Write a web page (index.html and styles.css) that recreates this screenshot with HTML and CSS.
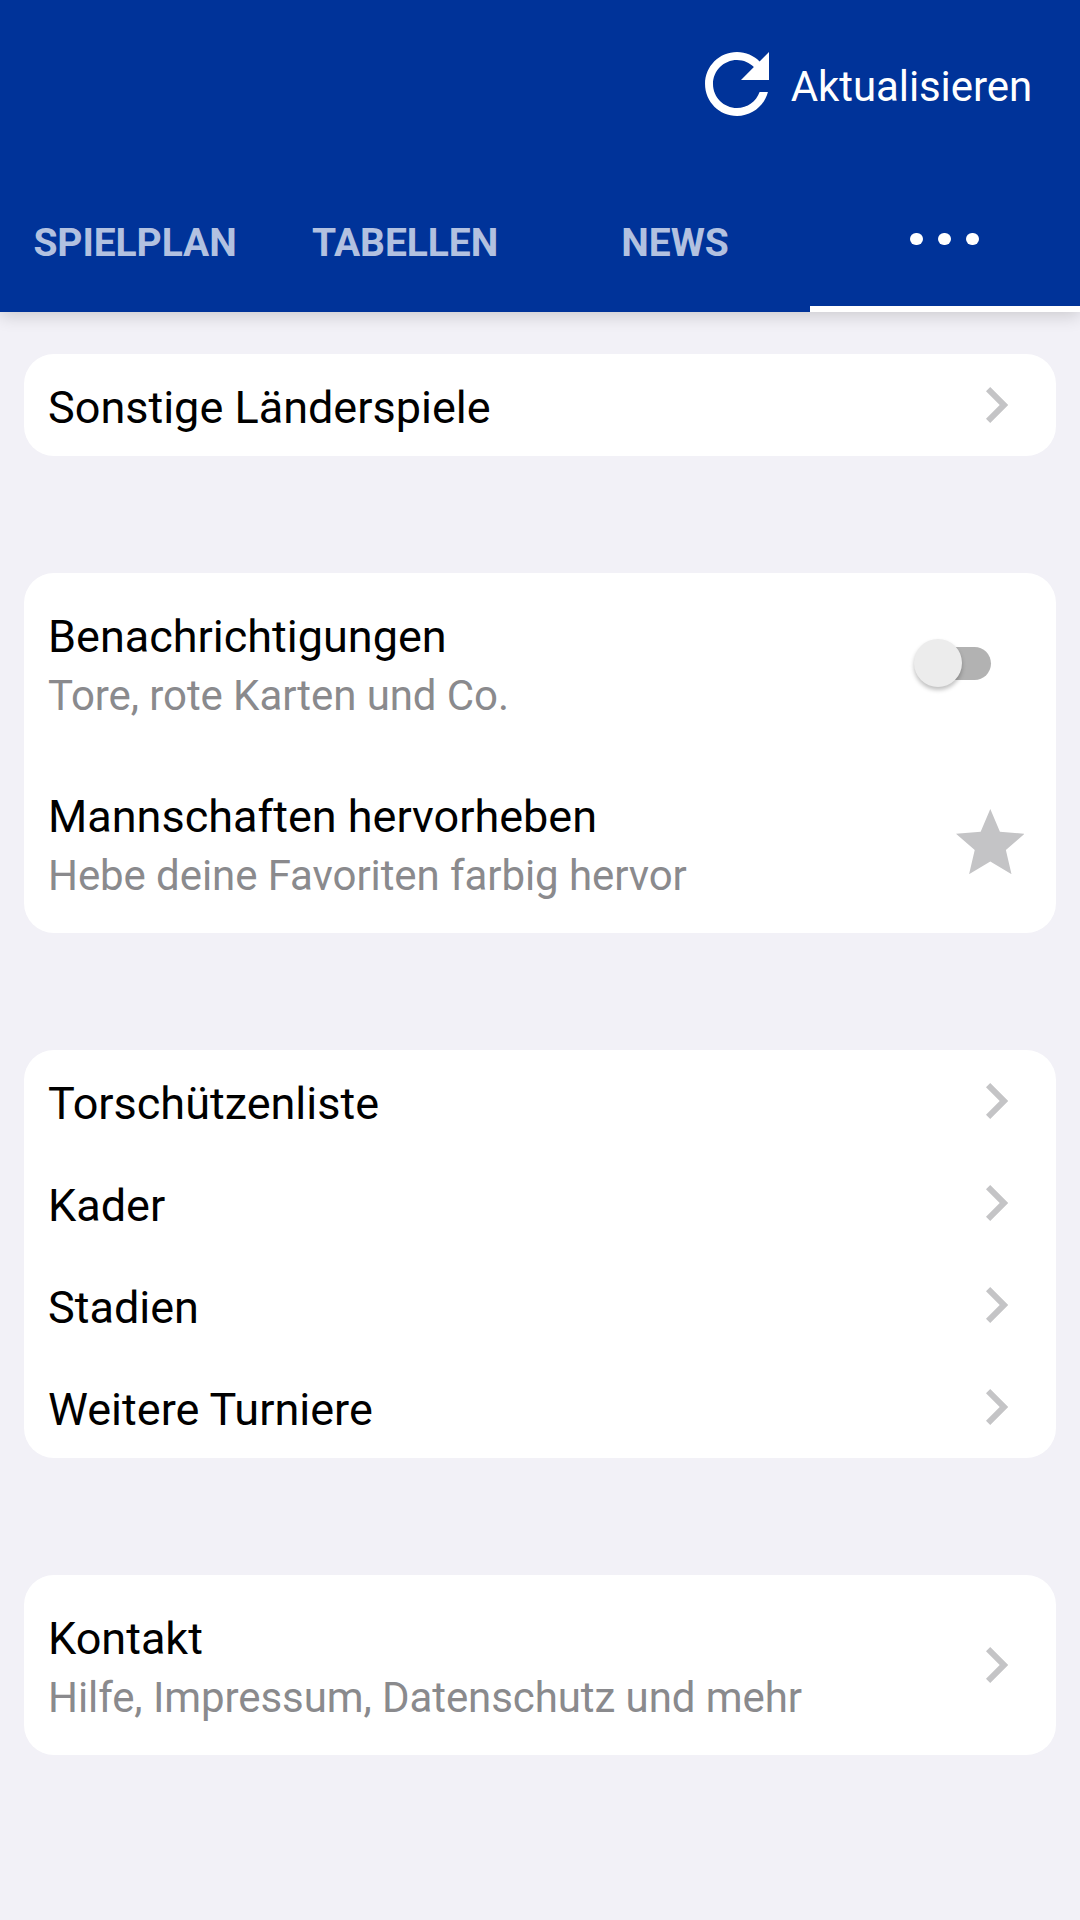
FILE: index.html
```html
<!DOCTYPE html>
<html lang="de">
<head>
<meta charset="utf-8">
<title>Mehr</title>
<link rel="stylesheet" href="styles.css">
</head>
<body>
<svg class="defs" width="0" height="0"><symbol id="chevron" viewBox="8.59 6 7.41 12"><path d="M10 6 8.59 7.41 13.17 12l-4.58 4.59L10 18l6-6z" fill="#c4c4c6"/></symbol></svg>
<header class="header">
  <div class="toolbar">
    <svg class="refresh" viewBox="4 4 16 16"><path d="M17.65 6.35C16.2 4.9 14.21 4 12 4c-4.42 0-7.99 3.58-7.99 8s3.57 8 7.99 8c3.73 0 6.84-2.55 7.73-6h-2.08c-.82 2.33-3.04 4-5.65 4-3.31 0-6-2.69-6-6s2.69-6 6-6c1.66 0 3.14.69 4.22 1.78L13 11h7V4l-2.35 2.35z" fill="#fff"/></svg>
    <span class="refresh-label">Aktualisieren</span>
  </div>
  <nav class="tabs">
    <div class="tab"><span>SPIELPLAN</span></div>
    <div class="tab"><span>TABELLEN</span></div>
    <div class="tab"><span>NEWS</span></div>
    <div class="tab active"><i class="dot"></i><i class="dot"></i><i class="dot"></i></div>
  </nav>
</header>
<main class="content">
  <section class="card">
    <div class="row"><div class="text"><div class="title">Sonstige Länderspiele</div></div><svg class="chevron"><use href="#chevron"/></svg></div>
  </section>
  <section class="card">
    <div class="row tall"><div class="text"><div class="title">Benachrichtigungen</div><div class="sub">Tore, rote Karten und Co.</div></div><div class="switch"><i class="thumb"></i></div></div>
    <div class="row tall"><div class="text"><div class="title">Mannschaften hervorheben</div><div class="sub">Hebe deine Favoriten farbig hervor</div></div><svg class="star" viewBox="2 2 20 19"><path fill="#c4c4c6" d="M12 17.27 18.18 21l-1.64-7.03L22 9.24l-7.19-.61L12 2 9.19 8.63 2 9.24l5.46 4.73L5.82 21z"/></svg></div>
  </section>
  <section class="card">
    <div class="row"><div class="text"><div class="title">Torschützenliste</div></div><svg class="chevron"><use href="#chevron"/></svg></div>
    <div class="row"><div class="text"><div class="title">Kader</div></div><svg class="chevron"><use href="#chevron"/></svg></div>
    <div class="row"><div class="text"><div class="title">Stadien</div></div><svg class="chevron"><use href="#chevron"/></svg></div>
    <div class="row"><div class="text"><div class="title">Weitere Turniere</div></div><svg class="chevron"><use href="#chevron"/></svg></div>
  </section>
  <section class="card">
    <div class="row tall"><div class="text"><div class="title">Kontakt</div><div class="sub">Hilfe, Impressum, Datenschutz und mehr</div></div><svg class="chevron"><use href="#chevron"/></svg></div>
  </section>
</main>
</body>
</html>
```
FILE: styles.css
```css
* { box-sizing: border-box; }
body { margin: 0; height: 1920px; background: #f2f1f7; font-family: Roboto, sans-serif; color: #000; }
.defs { display: block; width: 0; height: 0; }
.header { height: 312px; background: #003399; box-shadow: 0 4px 16px rgba(0,0,0,.16); display: flex; flex-direction: column; }
.toolbar { height: 168px; display: flex; justify-content: flex-end; align-items: center; padding-right: 48px; color: #fff; font-size: 42px; }
.refresh { width: 64px; height: 64px; margin-right: 22px; }
.refresh-label { padding-top: 5px; letter-spacing: -.08px; }
.tabs { flex: 1; display: grid; grid-template-columns: repeat(4, 1fr); }
.tab { display: flex; justify-content: center; align-items: center; padding-top: 6px; font-size: 39px; font-weight: 700; letter-spacing: -.08px; color: #b2c1e0; }
.tab.active { border-bottom: 6px solid #fff; gap: 15.5px; padding: 4px 1px 0 0; }
.dot { width: 12.5px; height: 12.5px; border-radius: 50%; background: #fff; }
.content { padding: 42px 24px 0; display: flex; flex-direction: column; gap: 117px; }
.card { background: #fff; border-radius: 30px; }
.row { height: 102px; padding: 0 48px 0 24px; display: flex; align-items: center; justify-content: space-between; }
.tall { height: 180px; }
.text { padding-top: 6px; }
.tall .text { padding-top: 5px; }
.title { font-size: 45px; line-height: 60px; }
.sub { font-size: 42px; line-height: 57px; letter-spacing: -.08px; color: #8a8a8d; }
.chevron { width: 22.2px; height: 36px; }
.switch { position: relative; width: 73px; height: 33px; border-radius: 17px; background: #b2b2b2; margin: 1px 17px 0 0; }
.thumb { position: absolute; left: -4px; top: -8px; width: 48px; height: 48px; border-radius: 50%; background: #ececec; box-shadow: 0 3px 4px rgba(0,0,0,.25); }
.star { width: 68.6px; height: 65.2px; margin: 0 -16.3px 3px 0; }
```
